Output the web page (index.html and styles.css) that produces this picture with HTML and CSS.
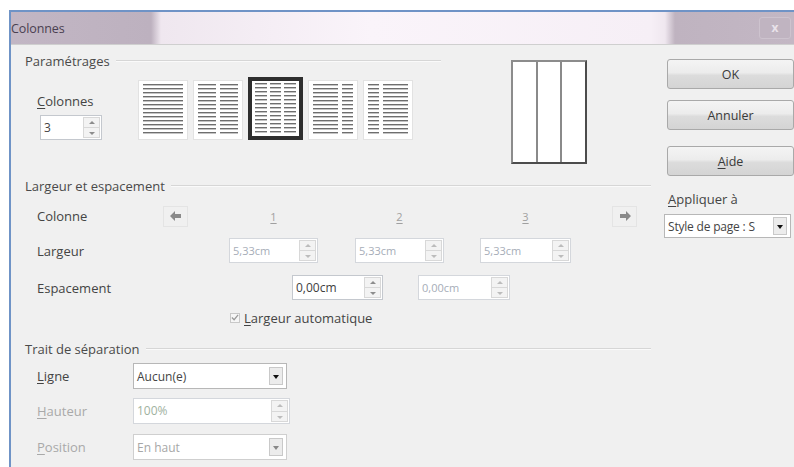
FILE: index.html
```html
<!DOCTYPE html>
<html lang="fr">
<head>
<meta charset="utf-8">
<title>Colonnes</title>
<link rel="stylesheet" href="styles.css">
</head>
<body>
<div class="window">
  <div class="titlebar">
    <span class="title">Colonnes</span>
    <span class="close">x</span>
  </div>
  <div class="client">
    <div class="main">
      <!-- Paramétrages -->
      <div class="params">
        <div class="params-left">
          <div class="group-head short"><span>Paramétrages</span><i></i></div>
          <div class="params-row">
            <div class="count">
              <div class="lbl"><u>C</u>olonnes</div>
              <div class="spin count-spin"><span class="val">3</span><span class="arrows"><i class="up"></i><i class="down"></i></span></div>
            </div>
            <div class="icons">
              <div class="col-icon"><span></span></div>
              <div class="col-icon"><span></span><span></span></div>
              <div class="col-icon selected"><span></span><span></span><span></span></div>
              <div class="col-icon"><span class="wide"></span><span></span></div>
              <div class="col-icon"><span></span><span class="wide"></span></div>
            </div>
          </div>
        </div>
        <div class="preview"><span></span><span></span><span></span></div>
      </div>

      <!-- Largeur et espacement -->
      <div class="group-head sec2"><span>Largeur et espacement</span><i></i></div>
      <div class="row r-col">
        <span class="label">Colonne</span>
        <span class="nav"><svg width="12" height="10" viewBox="0 0 12 10"><path d="M0 5 L5 0 L5 3 L11 3 L11 7 L5 7 L5 10 Z" fill="#8a8a8a"/></svg></span>
        <span class="num n1"><u>1</u></span>
        <span class="num n2"><u>2</u></span>
        <span class="num n3"><u>3</u></span>
        <span class="nav nav-r"><svg width="12" height="10" viewBox="0 0 12 10"><path d="M12 5 L7 0 L7 3 L1 3 L1 7 L7 7 L7 10 Z" fill="#8a8a8a"/></svg></span>
      </div>
      <div class="row r-width">
        <span class="label">Largeur</span>
        <div class="spin disabled f1"><span class="val">5,33cm</span><span class="arrows"><i class="up"></i><i class="down"></i></span></div>
        <div class="spin disabled f2"><span class="val">5,33cm</span><span class="arrows"><i class="up"></i><i class="down"></i></span></div>
        <div class="spin disabled f3"><span class="val">5,33cm</span><span class="arrows"><i class="up"></i><i class="down"></i></span></div>
      </div>
      <div class="row r-gap">
        <span class="label">Espacement</span>
        <div class="spin g1"><span class="val">0,00cm</span><span class="arrows"><i class="up"></i><i class="down"></i></span></div>
        <div class="spin disabled g2"><span class="val">0,00cm</span><span class="arrows"><i class="up"></i><i class="down"></i></span></div>
      </div>
      <div class="row r-check">
        <span class="check"><svg width="9" height="9" viewBox="0 0 9 9"><path d="M1 4.5 L3.5 7 L8 1.5" fill="none" stroke="#999" stroke-width="1.4"/></svg></span>
        <span class="check-lbl"><u>L</u>argeur automatique</span>
      </div>

      <!-- Trait de séparation -->
      <div class="group-head sec3"><span>Trait de séparation</span><i></i></div>
      <div class="row r-line">
        <span class="label short-lbl"><u>L</u>igne</span>
        <div class="select"><span class="val">Aucun(e)</span><span class="drop"></span></div>
      </div>
      <div class="row r-height">
        <span class="label short-lbl dim"><u>H</u>auteur</span>
        <div class="spin disabled tall"><span class="val green">100%</span><span class="arrows"><i class="up"></i><i class="down"></i></span></div>
      </div>
      <div class="row r-pos">
        <span class="label short-lbl dim"><u>P</u>osition</span>
        <div class="select disabled"><span class="val">En haut</span><span class="drop"></span></div>
      </div>
    </div>

    <div class="side">
      <button class="btn ok">OK</button>
      <button class="btn cancel">Annuler</button>
      <button class="btn help"><u>A</u>ide</button>
      <div class="apply-lbl"><u>A</u>ppliquer à</div>
      <div class="select apply"><span class="val">Style de page : S</span><span class="drop"></span></div>
    </div>
  </div>
</div>
</body>
</html>
```

FILE: styles.css
```css
html, body {
  margin: 0;
  padding: 0;
  background: #ffffff;
  overflow: hidden;
}

body {
  width: 794px;
  height: 467px;
  font-family: "Open Sans", "Noto Sans", sans-serif;
  font-size: 13px;
  color: #444444;
}

u { text-decoration: underline; text-underline-offset: 2px; }

/* window frame */
.window {
  margin-top: 10px;
  margin-left: 9px;
  border-left: 2px solid #6f93c6;
  border-top: 2px solid #6f93c6;
  height: 457px;
  background: #f0f0f0;
}

.titlebar {
  height: 32px;
  display: flex;
  align-items: center;
  justify-content: space-between;
  border-bottom: 1px solid #cfcfcf;
  background: linear-gradient(to right, #c2b6c4 0, #bdb1bf 140px, #efe7ef 150px, #faf4fa 360px, #f6eff6 640px, #efe7ef 654px, #bfb3c0 664px, #c3b7c4 100%);
}

.title {
  font-size: 12.5px;
  color: #4a4050;
  padding-left: 0;
  letter-spacing: -0.1px;
}

.close {
  width: 30px;
  height: 20px;
  margin-right: 3px;
  border: 1px solid #cdc3ce;
  border-radius: 3px;
  color: #e9e2ea;
  font-weight: bold;
  font-size: 12px;
  text-align: center;
  line-height: 19px;
  background: #c0b4c1;
}

.client {
  display: flex;
}

.main {
  width: 644px;
  padding-top: 8px;
}

/* group headers with the trailing rule */
.group-head {
  display: flex;
  align-items: center;
  height: 16px;
  padding-left: 14px;
  color: #4a4a4a;
}
.group-head span { white-space: nowrap; margin-right: 6px; }
.group-head i {
  flex: 1;
  height: 1px;
  background: #d6d6d6;
  border-bottom: 1px solid #fafafa;
  margin-right: 4px;
}
.group-head.short i { margin-right: 0; }
.sec2 { margin-top: 14px; }
.sec3 { margin-top: 16px; }

/* Paramétrages */
.params { display: flex; }
.params-left { width: 430px; }
.params-row { display: flex; align-items: flex-end; height: 71px; }

.count {
  margin-left: 26px;
  width: 101px;
  display: flex;
  flex-direction: column;
}
.count .lbl { margin-bottom: 5px; }
.count-spin { width: 62px; margin-left: 3px; height: 25px; }

.icons { display: flex; align-items: flex-end; gap: 5px; }
.col-icon {
  width: 50px;
  height: 60px;
  box-sizing: border-box;
  background: #ffffff;
  border: 1px solid #e2e2e2;
  padding: 3px 4px;
  display: flex;
  gap: 4px;
}
.col-icon span {
  flex: 1;
  background: repeating-linear-gradient(to bottom, #6e6e6e 0 1px, #c4c4c4 1px 2px, #ffffff 2px 4px);
}
.col-icon span.wide { flex: 2.3; }
.col-icon.selected {
  width: 55px;
  height: 63px;
  border: 4px solid #2e2e2e;
  padding: 2px 3px;
  gap: 3px;
}

.preview {
  margin-top: 7px;
  margin-left: 70px;
  width: 76px;
  height: 104px;
  box-sizing: border-box;
  border: 2px solid #4c4c4c;
  border-top-color: #8c8c8c;
  border-left-color: #8c8c8c;
  background: #ffffff;
  display: flex;
}
.preview span { flex: 1; border-right: 2px solid #8a8a8a; }
.preview span:last-child { border-right: none; }

/* rows */
.row { display: flex; align-items: center; }
.label { width: 126px; margin-left: 26px; flex-shrink: 0; }
.label.short-lbl { width: 96px; }
.dim { color: #a9a9a9; }

.r-col { margin-top: 11px; height: 22px; }
.nav {
  width: 25px;
  height: 21px;
  box-sizing: border-box;
  border: 1px solid #e4e4e4;
  display: flex;
  align-items: center;
  justify-content: center;
}
.nav-r { margin-left: 41px; }
.num {
  width: 89px;
  text-align: center;
  color: #a0a0a0;
  font-size: 11px;
}
.n1 { margin-left: 41px; }
.n2 { margin-left: 37px; }
.n3 { margin-left: 36px; width: 91px; }

.r-width { margin-top: 11px; }
.r-gap { margin-top: 12px; }
.r-check { margin-top: 10px; height: 15px; }
.r-line { margin-top: 6px; }
.r-height { margin-top: 9px; }
.r-pos { margin-top: 10px; }

/* spin fields */
.spin {
  display: flex;
  height: 25px;
  box-sizing: border-box;
  background: #ffffff;
  border: 1px solid #c4c8ce;
}
.spin .val {
  flex: 1;
  padding-left: 3px;
  line-height: 23px;
  font-size: 12px;
  white-space: nowrap;
  overflow: hidden;
}
.spin.disabled { border-color: #d4d7dc; }
.spin.disabled .val { color: #a6adb8; font-size: 11px; }
.spin .val.green { color: #9fb29f; font-size: 12px; }
.arrows {
  width: 17px;
  display: flex;
  flex-direction: column;
  margin: 1px 1px 1px 0;
}
.arrows i {
  flex: 1;
  border: 1px solid #d8d8d8;
  background: #f3f3f3;
  position: relative;
}
.arrows i + i { border-top: none; }
.arrows i::after {
  content: "";
  position: absolute;
  left: 5px;
  top: 3px;
  border-left: 3px solid transparent;
  border-right: 3px solid transparent;
}
.arrows .up::after { border-bottom: 3px solid #8d8d8d; }
.arrows .down::after { border-top: 3px solid #8d8d8d; top: 4px; }
.spin.disabled .arrows .up::after { border-bottom-color: #bcbcbc; }
.spin.disabled .arrows .down::after { border-top-color: #bcbcbc; }

.f1 { width: 89px; margin-left: 66px; }
.f2 { width: 89px; margin-left: 37px; }
.f3 { width: 91px; margin-left: 36px; }
.g1 { width: 91px; margin-left: 129px; }
.g1 .val { color: #3e3e3e; }
.g2 { width: 92px; margin-left: 35px; }
.tall { width: 157px; height: 26px; }

/* checkbox */
.check {
  margin-left: 219px;
  width: 10px;
  height: 10px;
  box-sizing: border-box;
  border: 1px solid #c8c8c8;
  background: #f6f6f6;
  display: flex;
  align-items: center;
  justify-content: center;
}
.check-lbl { margin-left: 4px; }

/* drop-down lists */
.select {
  display: flex;
  align-items: center;
  width: 154px;
  height: 26px;
  box-sizing: border-box;
  background: #ffffff;
  border: 1px solid #b7b7b7;
}
.select .val {
  flex: 1;
  padding-left: 3px;
  font-size: 12px;
  white-space: nowrap;
  overflow: hidden;
}
.select.disabled { border-color: #cfcfcf; }
.select.disabled .val { color: #a7a7a7; }
.drop {
  width: 14px;
  height: 18px;
  margin-right: 3px;
  box-sizing: border-box;
  border: 1px solid #c9c9c9;
  background: #ececec;
  position: relative;
}
.drop::after {
  content: "";
  position: absolute;
  left: 3px;
  top: 7px;
  border-left: 3px solid transparent;
  border-right: 3px solid transparent;
  border-top: 4px solid #111;
}
.select.disabled .drop::after { border-top-color: #888; }

/* right column */
.side {
  margin-left: 9px;
  width: 130px;
  display: flex;
  flex-direction: column;
}
.btn {
  margin-left: 3px;
  width: 127px;
  height: 30px;
  border: 1px solid #a9a9a9;
  border-radius: 3px;
  background: linear-gradient(to bottom, #f4f4f4 0, #ececec 45%, #dcdcdc 55%, #d4d4d4 100%);
  font-family: inherit;
  font-size: 12.5px;
  color: #3a3a3a;
  padding: 0;
}
.ok { margin-top: 14px; }
.cancel { margin-top: 11px; }
.help { margin-top: 16px; }
.apply-lbl { margin-top: 14px; margin-left: 4px; height: 18px; }
.select.apply {
  margin-top: 6px;
  width: 127px;
  height: 24px;
}
.select.apply .val { letter-spacing: -0.2px; }
```
